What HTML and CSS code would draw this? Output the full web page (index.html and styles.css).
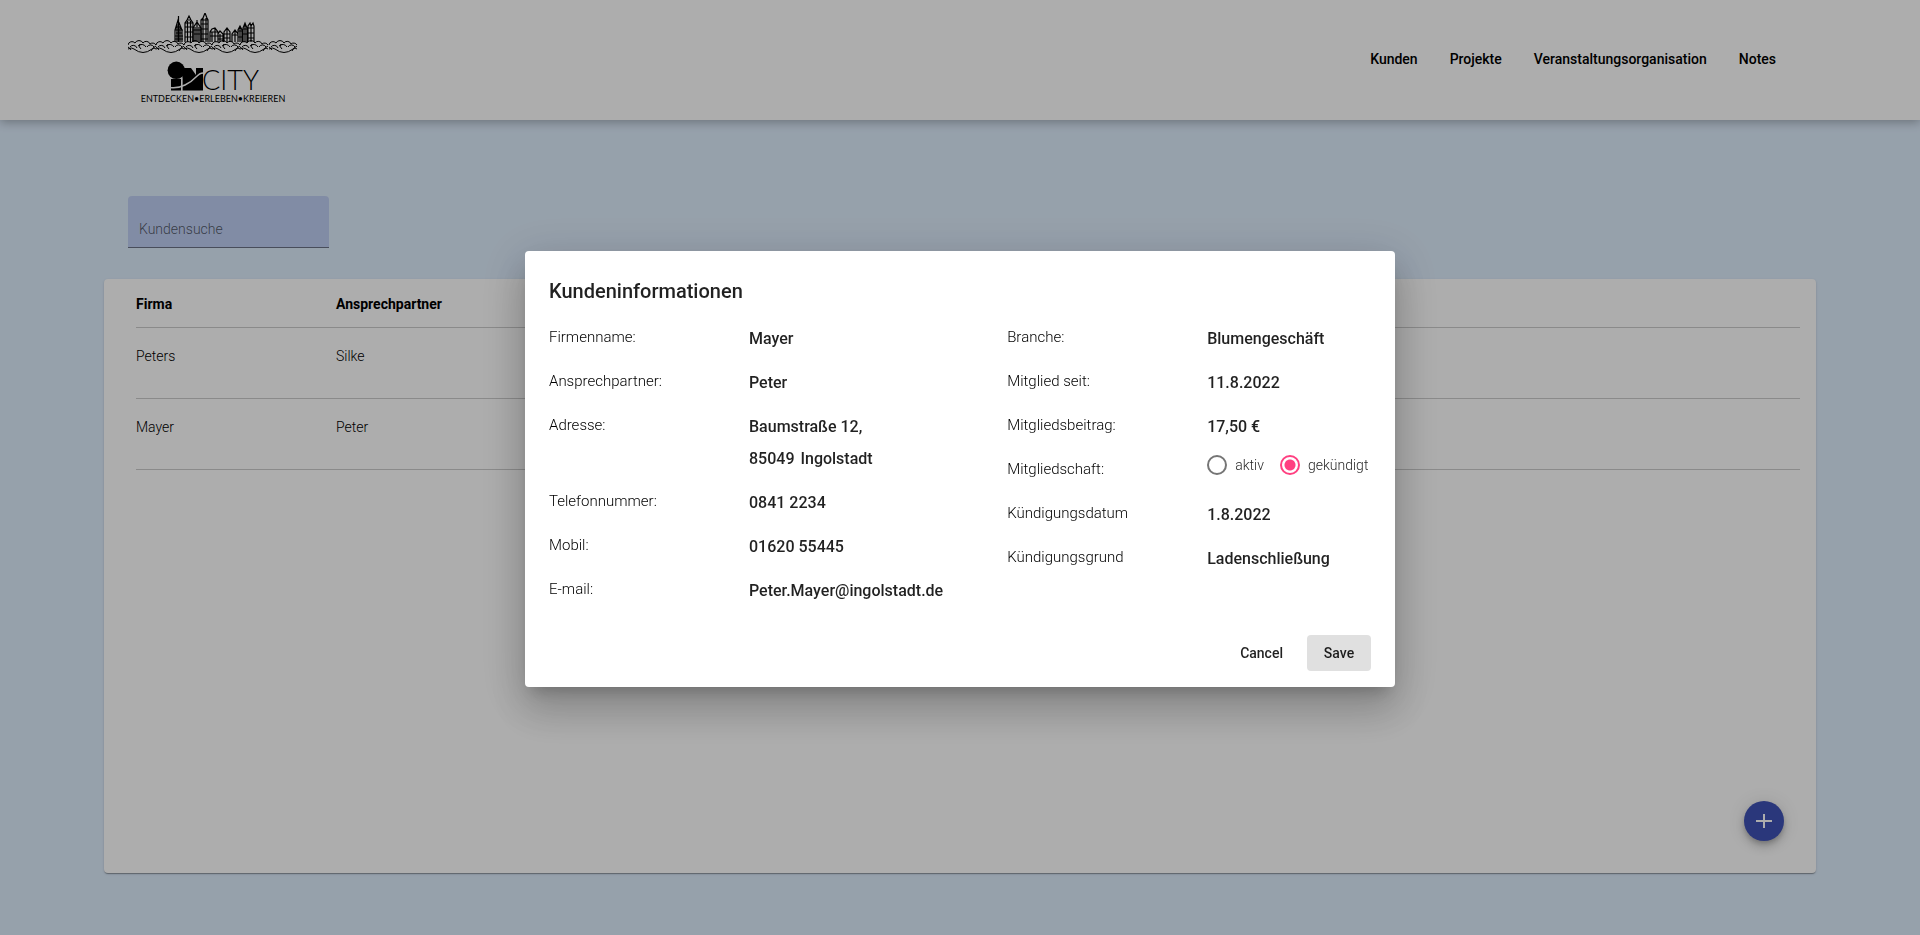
FILE: index.html
```html
<!DOCTYPE html>
<html lang="de">
<head>
<meta charset="utf-8">
<meta name="viewport" content="width=device-width, initial-scale=1">
<title>IN City – Kunden</title>
<link rel="stylesheet" href="styles.css">
</head>
<body>
<header class="site-header">
  <a class="logo" href="#" aria-label="IN City">
    <svg width="170" height="92" viewBox="0 0 170 92">
      <defs>
        <g id="cloud" fill="none" stroke="#000" stroke-width="1">
          <path d="M0 32a4 4 0 0 1 7-2a4.500 4.500 0 0 1 8 0a4 4 0 0 1 7 1a4 4 0 0 1 6 1"/>
          <path d="M2 34a4 4 0 0 1 7 1M10 33a5 5 0 0 1 8 1M19 34a4 4 0 0 1 7 0"/>
          <path d="M0 36q4-2 6 0q9 7 18 0q2-2 4 0M0 34q2 1 3 3M28 33q-4 2-5 5M12 31q-2 3 1 5"/>
        </g>
      </defs>
      <g fill="none" stroke="#000" stroke-width="1.200">
        <path d="M47 29V17l3-10 4 10v12M50.500 3v26M47 17h8M48 20h6M47 23h8M47 26h8M52 12v17M49 10v19M48 14h5"/>
        <path d="M57 29V10l2-3 2-4 2 4 2 3v19M57 10h8M57 14h8M57 19h8M57 24h8M59 7h4M59.500 8v21M62.500 8v21"/>
        <path d="M65 29V15l4-6 4 6v14M65 17h8M69 7v22M67 14v15M71 14v15M66 21h6"/>
        <path d="M73 29V7l2-2 2-5 2 5 1 2v22M73 7h7M73 11h7M73 16h7M73 21h7M73 26h7M75 5v24M78 5v24"/>
        <path d="M82 29V19l2-3 3-1 3 4v10M82 19h8M82 23h8M84 19v10M87 15v14M90 21l2-3 3 3v8M90 23h6M90 26h6M92 21v8M96 29V19l3-4 3 4v10M96 21h6M99 15v14M96 25h6"/>
        <path d="M104 29v-8l3-4 3 4v8M104 22h6M107 17v12M110 29V17l2-4 2 4v12M110 18h4M112 13v16M110 24h5M115 29V15l2-5 2 5v14M115 16h5M117 10v19M120 29V13l2-3 1 3 2-3 1 3v16M120 15h6M120 20h6M115 21h5M120 25h6M123 11v18"/>
      </g>
      <use href="#cloud"/><use href="#cloud" x="28"/><use href="#cloud" x="56"/><use href="#cloud" x="84"/><use href="#cloud" x="112"/><use href="#cloud" x="141"/>
      <path d="M43 66h10v11.500H43zM54.500 55h8.500l5 7V55h7v22.500H54.500z"/>
      <circle cx="48.300" cy="57.300" r="8.700"/>
      <path d="M42 74.500q8 1 15-2.500t11-8 8-4" fill="none" stroke="#fff" stroke-width="1.400"/>
      <path d="M53.700 65v13" stroke="#fff" stroke-width="1.200"/>
      <text class="logo-city" x="74" y="77">CITY</text>
      <text class="logo-claim" x="85" y="89">ENTDECKEN•ERLEBEN•KREIEREN</text>
    </svg>
  </a>
  <nav class="nav">
    <a href="#">Kunden</a>
    <a href="#">Projekte</a>
    <a href="#">Veranstaltungsorganisation</a>
    <a href="#">Notes</a>
  </nav>
</header>

<main class="page">
  <input class="search" type="search" placeholder="Kundensuche" aria-label="Kundensuche">
  <section class="card">
    <table class="customers">
      <thead>
        <tr><th class="col" scope="col">Firma</th><th scope="col">Ansprechpartner</th></tr>
      </thead>
      <tbody>
        <tr><td>Peters</td><td>Silke</td></tr>
        <tr><td>Mayer</td><td>Peter</td></tr>
      </tbody>
    </table>
    <button class="fab" type="button" aria-label="Kunde hinzufügen">
      <svg width="24" height="24" viewBox="0 0 24 24"><path d="M12 5v14M4 12h16" fill="none" stroke="#fff" stroke-width="2"/></svg>
    </button>
  </section>
</main>

<div class="backdrop">
  <dialog class="dialog" open aria-labelledby="dialog-title">
    <h1 class="dialog-title" id="dialog-title">Kundeninformationen</h1>
    <div class="details">
      <dl class="fields">
        <dt>Firmenname:</dt><dd>Mayer</dd>
        <dt>Ansprechpartner:</dt><dd>Peter</dd>
        <dt>Adresse:</dt><dd>Baumstraße 12,<br><span class="postcode">85049</span> Ingolstadt</dd>
        <dt>Telefonnummer:</dt><dd>0841 2234</dd>
        <dt>Mobil:</dt><dd>01620 55445</dd>
        <dt>E-mail:</dt><dd>Peter.Mayer@ingolstadt.de</dd>
      </dl>
      <dl class="fields">
        <dt>Branche:</dt><dd>Blumengeschäft</dd>
        <dt>Mitglied seit:</dt><dd>11.8.2022</dd>
        <dt>Mitgliedsbeitrag:</dt><dd>17,50 €</dd>
        <dt>Mitgliedschaft:</dt>
        <dd class="radios">
          <label class="radio"><input type="radio" name="status">aktiv</label>
          <label class="radio"><input type="radio" name="status" checked>gekündigt</label>
        </dd>
        <dt>Kündigungsdatum</dt><dd>1.8.2022</dd>
        <dt>Kündigungsgrund</dt><dd>Ladenschließung</dd>
      </dl>
    </div>
    <div class="actions">
      <button class="btn" type="button">Cancel</button>
      <button class="btn btn-active" type="button">Save</button>
    </div>
  </dialog>
</div>
</body>
</html>
```
FILE: styles.css
```css
* { box-sizing: border-box; }

body {
  margin: 0;
  min-height: 100vh;
  background: #deedfd;
  color: rgba(0, 0, 0, .87);
  font: 300 14px/20px Roboto, sans-serif;
}

.site-header {
  position: relative;
  display: flex;
  align-items: flex-start;
  justify-content: space-between;
  height: 120px;
  padding: 13px 128px 0;
  background: #fff;
  box-shadow: 0 2px 10px rgba(0, 0, 0, .3);
}

.logo { height: 92px; }
.logo svg { display: block; }
.logo-city { font: 300 27px Lato, sans-serif; }
.logo-claim { font: 400 9px Lato, sans-serif; text-anchor: middle; }

.nav {
  display: flex;
  align-items: center;
  height: 92px;
}
.nav a {
  padding: 8px 16px;
  color: #000;
  font-weight: 500;
  text-decoration: none;
}

.page { padding: 76px 104px 62px; }

.search {
  display: block;
  width: 201px;
  height: 52px;
  margin: 0 0 31px 24px;
  padding: 14px 11px 0;
  border: 0;
  border-bottom: 1px solid #6b7286;
  border-radius: 4px 4px 0 0;
  background: #bfcff3;
  font: inherit;
  outline: 0;
}
.search::placeholder { color: rgba(0, 0, 0, .6); }

.card {
  position: relative;
  min-height: 594px;
  padding: 0 16px 0 32px;
  border-radius: 4px;
  background: #fff;
  box-shadow: 0 2px 1px -1px rgba(0, 0, 0, .2), 0 1px 1px rgba(0, 0, 0, .14), 0 1px 3px rgba(0, 0, 0, .12);
}

.customers {
  width: 100%;
  border-collapse: separate;
  border-spacing: 0;
  color: #000;
  text-align: left;
}
.customers th, .customers td {
  padding: 0;
  border-bottom: 1px solid #ccc;
}
.customers .col { width: 200px; }
.customers th {
  padding: 15px 0 13px;
  font-weight: 700;
}
.customers td { padding: 18px 0 32px; }

.fab {
  position: absolute;
  right: 32px;
  bottom: 32px;
  display: grid;
  place-items: center;
  width: 40px;
  height: 40px;
  padding: 0;
  border: 0;
  border-radius: 50%;
  background: #3f51b5;
  box-shadow: 0 3px 5px -1px rgba(0, 0, 0, .2), 0 6px 10px rgba(0, 0, 0, .14), 0 1px 18px rgba(0, 0, 0, .12);
}

.backdrop {
  position: fixed;
  inset: 0;
  display: grid;
  place-items: center;
  padding-top: 3px;
  background: rgba(0, 0, 0, .32);
}

.dialog {
  position: static;
  min-width: 870px;
  margin: 0;
  padding: 24px 24px 16px;
  border: 0;
  border-radius: 4px;
  background: #fff;
  color: rgba(0, 0, 0, .87);
  box-shadow: 0 11px 15px -7px rgba(0, 0, 0, .2), 0 24px 38px 3px rgba(0, 0, 0, .14), 0 9px 46px 8px rgba(0, 0, 0, .12);
}
.dialog-title {
  margin: 0 0 16px;
  font-size: 20px;
  font-weight: 500;
  line-height: 32px;
}

.details {
  display: flex;
  gap: 64px;
}
.fields {
  display: grid;
  grid-template-columns: 200px auto;
  align-content: start;
  row-gap: 12px;
  margin: 0;
  line-height: 32px;
}
.fields dt { color: #000; font-size: 15px; line-height: 28px; }
.fields dd {
  margin: 0;
  font-size: 16px;
  font-weight: 500;
}
.postcode { margin-right: 2px; }

.fields .radios {
  display: flex;
  gap: 16px;
  height: 32px;
  font-size: 14px;
  font-weight: 300;
}
.radio {
  display: flex;
  align-items: center;
  gap: 8px;
  height: 20px;
}
.radio input {
  width: 20px;
  height: 20px;
  margin: 0;
  border: 2px solid #757575;
  border-radius: 50%;
  appearance: none;
}
.radio input:checked {
  border-color: #ff4081;
  background: radial-gradient(circle, #ff4081 5px, #fff 6px);
}

.actions {
  display: flex;
  justify-content: flex-end;
  gap: 8px;
  margin-top: 28px;
}
.btn {
  min-width: 64px;
  padding: 0 16px;
  border: 0;
  border-radius: 4px;
  background: none;
  color: rgba(0, 0, 0, .87);
  font: 500 14px/36px Roboto, sans-serif;
}
.btn-active { background: #e0e0e0; }
```
